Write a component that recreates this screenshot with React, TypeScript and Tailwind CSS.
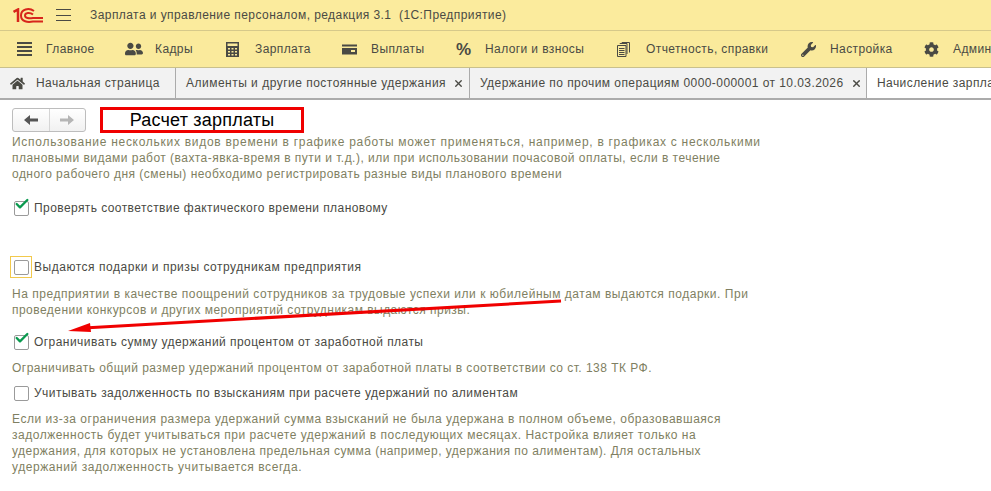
import { Check, X } from "lucide-react"
import { FaCog, FaHome, FaUserFriends, FaWrench } from "react-icons/fa"

const menu = [
  { label: "Главное", icon: "lines", w: "w-[109px]" },
  { label: "Кадры", icon: "users", w: "w-[100px]" },
  { label: "Зарплата", icon: "calc", w: "w-[116px]" },
  { label: "Выплаты", icon: "card", w: "w-[114px]" },
  { label: "Налоги и взносы", icon: "pct", w: "w-[161px]" },
  { label: "Отчетность, справки", icon: "docs", w: "w-[184px]" },
  { label: "Настройка", icon: "wrench", w: "w-[123px]" },
  { label: "Администрирование", icon: "gear", w: "w-[160px]" },
]

function MenuIcon({ name }: { name: string }) {
  if (name === "lines")
    return (
      <svg width="15" height="16" viewBox="0 0 15 16" fill="#4a4a44">
        <rect y="1" width="15" height="2" />
        <rect y="5" width="15" height="2" />
        <rect y="9" width="15" height="2" />
        <rect y="13" width="15" height="2" />
      </svg>
    )
  if (name === "users") return <FaUserFriends size={18} color="#4a4a44" className="-ml-px" />
  if (name === "calc")
    return (
      <svg width="13" height="15" viewBox="0 0 13 15" fill="#4a4a44">
        <path d="M0 0h13v15H0z M1.500 1.500v2.500h10V1.500z" fillRule="evenodd" />
        <path
          fill="#faea9c"
          d="M2 6h2v1.500H2zM5.500 6h2v1.500h-2zM9 6h2v1.500H9zM2 9h2v1.500H2zM5.500 9h2v1.500h-2zM9 9h2v1.500H9zM2 12h2v1.500H2zM5.500 12h2v1.500h-2zM9 12h2v1.500H9z"
        />
      </svg>
    )
  if (name === "card")
    return (
      <svg width="15" height="12" viewBox="0 0 15 12" fill="#4a4a44">
        <path d="M0 1.500h15v2H0z" />
        <path d="M0 5h15v6.500H0z M9 7v2h4V7z" fillRule="evenodd" />
      </svg>
    )
  if (name === "pct") return <span className="text-[17px] font-bold text-[#4a4a44]">%</span>
  if (name === "docs")
    return (
      <svg width="13" height="15" viewBox="0 0 13 15" fill="none" stroke="#4a4a44">
        <path d="M.5 3.500h8.500v11H.5zM2 6.500h5.500M2 8.500h5.500M2 10.500h5.500M2 12.500h5.500" />
        <path d="M3 2V1.500h7V12M5 1V.5h7.500V10.500" />
      </svg>
    )
  if (name === "wrench") return <FaWrench size={15} color="#4a4a44" />
  return <FaCog size={15} color="#4a4a44" />
}

function CheckRow({
  checked,
  focused,
  label,
  track,
}: {
  checked?: boolean
  focused?: boolean
  label: string
  track: string
}) {
  return (
    <div className="flex h-[22px] items-center">
      <div
        className={`relative ml-[10px] mr-[2px] flex h-[22px] w-[22px] shrink-0 items-center justify-center ${
          focused ? "border border-[#f2c94c]" : ""
        }`}
      >
        <div className="h-[15px] w-[15px] rounded-[2px] border border-[#9a9a9a] bg-white" />
        {checked && (
          <Check size={16} strokeWidth={3.5} className="absolute left-[4px] top-[-1px] text-[#0a9a4f]" />
        )}
      </div>
      <span className={`whitespace-nowrap text-[#4a4a44] ${track}`}>{label}</span>
    </div>
  )
}

export default function App() {
  return (
    <div
      className="relative h-[491px] w-[991px] overflow-hidden bg-white text-[12px] leading-[15px] tracking-[0.4px] text-[#4a4a44]"
      style={{ fontFamily: '"Liberation Sans", Arial, sans-serif' }}
    >
      {/* Title bar */}
      <div className="flex h-[31px] items-center border-b border-[#d6c98a] bg-[#fbeb9d]">
        <svg width="30" height="15" viewBox="0 0 30 15" className="ml-[13px] shrink-0" fill="none" stroke="#d7261c" strokeWidth="1.5">
          <path d="M0.500 4 L5 1.500 V14" strokeWidth="2.500" />
          <path d="M21 3 C16 -0.500 8 1 8 7.500 C8 14 15 14.500 20 13.500 H30" strokeWidth="2" />
          <path d="M20 6.500 C17 4 12 4.500 12 7.500 C12 10.500 16 10.500 20 10 H30" strokeWidth="2" />
        </svg>
        <div className="ml-[13px] flex h-[12px] w-[15px] shrink-0 flex-col justify-between">
          <div className="h-px bg-[#4a4a44]" />
          <div className="h-px bg-[#4a4a44]" />
          <div className="h-px bg-[#4a4a44]" />
        </div>
        <span className="ml-[19px] whitespace-pre tracking-[0.43px]">Зарплата и управление персоналом, редакция 3.1  (1С:Предприятие)</span>
      </div>

      {/* Section menu */}
      <div className="flex h-[37px] items-center overflow-hidden border-b border-[#c9c08c] bg-[#faea9c] pl-[17px]">
        {menu.map((m) => (
          <div key={m.label} className={`flex shrink-0 items-center ${m.w}`}>
            <div className="flex w-[29px] shrink-0 items-center">
              <MenuIcon name={m.icon} />
            </div>
            <span className="whitespace-nowrap">{m.label}</span>
          </div>
        ))}
      </div>

      {/* Open tabs */}
      <div className="flex h-[32px] overflow-hidden border-b-2 border-[#ababab] bg-[#f2f2f2] tracking-[0.43px]">
        <div className="flex w-[176px] shrink-0 items-center border-r border-[#ababab] pl-[10px]">
          <FaHome size={15} color="#4a4a44" />
          <span className="ml-[11px] whitespace-nowrap">Начальная страница</span>
        </div>
        <div className="flex w-[294px] shrink-0 items-center border-r border-[#ababab] pl-[10px]">
          <span className="whitespace-nowrap tracking-[0.49px]">Алименты и другие постоянные удержания</span>
          <X size={11} strokeWidth={3} className="ml-[7px] shrink-0" />
        </div>
        <div className="flex w-[397px] shrink-0 items-center border-r border-[#ababab] pl-[10px]">
          <span className="whitespace-nowrap">Удержание по прочим операциям 0000-000001 от 10.03.2026</span>
          <X size={11} strokeWidth={3} className="ml-[7px] shrink-0" />
        </div>
        <div className="flex shrink-0 items-center bg-white pl-[10px]">
          <span className="whitespace-nowrap">Начисление зарплаты и взносов</span>
        </div>
      </div>

      {/* Content */}
      <div className="pt-[8px]">
        <div className="ml-[12px] flex h-[24px] w-[74px] rounded-[3px] border border-[#bdbdbd] bg-gradient-to-b from-white to-[#f1f1f1]">
          <div className="flex flex-1 items-center justify-center border-r border-[#d5d5d5]">
            <svg width="14" height="10" viewBox="0 0 14 10" fill="#555">
              <path d="M0 5 L6 0 V3.500 H14 V6.500 H6 V10 Z" />
            </svg>
          </div>
          <div className="flex flex-1 items-center justify-center">
            <svg width="14" height="10" viewBox="0 0 14 10" fill="#b5b5b5">
              <path d="M14 5 L8 0 V3.500 H0 V6.500 H8 V10 Z" />
            </svg>
          </div>
        </div>

        <p className="ml-[12px] mt-[2px] w-[765px] leading-[16px] tracking-[0.47px] text-[#7f7f62]">
          <span className="tracking-[0.72px]">
            Использование нескольких видов времени в графике работы может применяться, например, в графиках с несколькими
          </span>
          <br />
          плановыми видами работ (вахта-явка-время в пути и т.д.), или при использовании почасовой оплаты, если в течение
          <br />
          одного рабочего дня (смены) необходимо регистрировать разные виды планового времени
        </p>

        <div className="mt-[15px]">
          <CheckRow checked track="tracking-[0.42px]" label="Проверять соответствие фактического времени плановому" />
        </div>
        <div className="mt-[37px]">
          <CheckRow focused track="tracking-[0.53px]" label="Выдаются подарки и призы сотрудникам предприятия" />
        </div>
        <p className="ml-[12px] mt-[8px] w-[765px] leading-[16px] tracking-[0.47px] text-[#7f7f62]">
          <span className="tracking-[0.52px]">
            На предприятии в качестве поощрений сотрудников за трудовые успехи или к юбилейным датам выдаются подарки. При
          </span>
          <br />
          проведении конкурсов и других мероприятий сотрудникам выдаются призы.
        </p>
        <div className="mt-[13px]">
          <CheckRow checked track="tracking-[0.45px]" label="Ограничивать сумму удержаний процентом от заработной платы" />
        </div>
        <p className="ml-[12px] mt-[7px] leading-[16px] tracking-[0.47px] text-[#7f7f62]">
          Ограничивать общий размер удержаний процентом от заработной платы в соответствии со ст. 138 ТК РФ.
        </p>
        <div className="mt-[6px]">
          <CheckRow track="tracking-[0.47px]" label="Учитывать задолженность по взысканиям при расчете удержаний по алиментам" />
        </div>
        <p className="ml-[12px] mt-[7px] w-[765px] leading-[16px] tracking-[0.47px] text-[#7f7f62]">
          <span className="tracking-[0.52px]">
            Если из-за ограничения размера удержаний сумма взысканий не была удержана в полном объеме, образовавшаяся
          </span>
          <br />
          <span className="tracking-[0.51px]">
            задолженность будет учитываться при расчете удержаний в последующих месяцах. Настройка влияет только на
          </span>
          <br />
          удержания, для которых не установлена предельная сумма (например, удержания по алиментам). Для остальных
          <br />
          <span className="tracking-[0.57px]">удержаний задолженность учитывается всегда.</span>
        </p>
      </div>

      {/* Annotations drawn over the screenshot */}
      <div className="absolute left-[100px] top-[107px] flex h-[26px] w-[204px] items-center justify-center border-[3px] border-[#f00000] bg-white text-[18px] tracking-[0.2px] text-black">
        Расчет зарплаты
      </div>
      <svg className="absolute left-[60px] top-[295px]" width="505" height="45" viewBox="0 0 505 45">
        <path d="M501 6 L24 33" stroke="#f00000" strokeWidth="3" fill="none" />
        <path d="M8 36 L30 28 L31 37 Z" fill="#f00000" />
      </svg>
    </div>
  )
}
